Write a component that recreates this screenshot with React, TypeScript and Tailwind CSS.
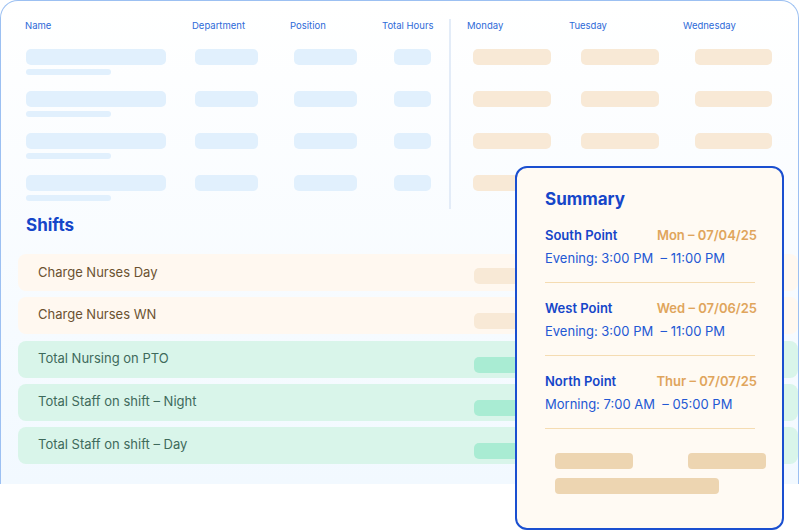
import React from "react";

const rows = [0, 1, 2, 3];
const f = { fontFamily: "Inter, 'Noto Sans', sans-serif" };

export default function App() {
  return (
    <div className="relative w-[800px] h-[531px] bg-white overflow-hidden" style={f}>
      <div className="h-[484px] w-[799px] rounded-t-[18px] border-x border-t border-[#9cc0f2] bg-gradient-to-b from-white to-[#f2f9ff] relative">
        <div className="flex pt-[18px]">
          <div className="w-[450px] border-r-2 border-[#e3ecf8] h-[190px]">
            <div className="flex text-[9.5px] text-[#2d6ad8] h-[14px] items-center">
              <div className="w-[191px] pl-[24px]">Name</div>
              <div className="w-[98px]">Department</div>
              <div className="w-[92px]">Position</div>
              <div>Total Hours</div>
            </div>
            <div className="flex flex-col gap-[26px] mt-[16px]">
              {rows.map((r) => (
                <div key={r} className="flex h-[16px]">
                  <div className="w-[194px] pl-[25px]">
                    <div className="h-[16px] w-[140px] rounded-[5px] bg-[#e1f0fd]" />
                    <div className="h-[6px] w-[85px] mt-[4px] rounded-full bg-[#e1f0fd]" />
                  </div>
                  <div className="w-[99px]"><div className="h-[16px] w-[63px] rounded-[5px] bg-[#e1f0fd]" /></div>
                  <div className="w-[100px]"><div className="h-[16px] w-[63px] rounded-[5px] bg-[#e1f0fd]" /></div>
                  <div className="h-[16px] w-[37px] rounded-[5px] bg-[#e1f0fd]" />
                </div>
              ))}
            </div>
          </div>
          <div className="flex-1">
            <div className="flex text-[9.5px] text-[#2d6ad8] h-[14px] items-center">
              <div className="w-[102px] pl-[16px]">Monday</div>
              <div className="w-[116px] pl-[16px]">Tuesday</div>
              <div className="pl-[14px]">Wednesday</div>
            </div>
            <div className="flex flex-col gap-[26px] mt-[16px]">
              {rows.map((r) => (
                <div key={r} className="flex h-[16px] pl-[22px]">
                  <div className="w-[78px] h-[16px] rounded-[5px] bg-[#f8e9d6]" />
                  <div className="w-[78px] h-[16px] rounded-[5px] bg-[#f8e9d6] ml-[30px]" />
                  <div className="w-[77px] h-[16px] rounded-[5px] bg-[#f8e9d6] ml-[36px]" />
                </div>
              ))}
            </div>
          </div>
        </div>
        <div className="pl-[25px] mt-[6px] text-[17px] font-bold text-[#1546c9] leading-[20px]">Shifts</div>
        <div className="flex flex-col gap-[6px] pl-[17px] mt-[19px]">
          {[
            ["Charge Nurses Day", "o", "c"],
            ["Charge Nurses WN", "o", "t"],
            ["Total Nursing on PTO", "g", "t"],
            ["Total Staff on shift – Night", "g", "t"],
            ["Total Staff on shift – Day", "g", "t"],
          ].map(([t, c, a], i) => (
            <div
              key={i}
              className={`relative h-[37px] rounded-[8px] pl-[20px] text-[13px] flex ${a === "c" ? "items-center" : "items-start pt-[8px]"} ${
                c === "o" ? "bg-[#fff8f0] text-[#6b5230]" : "bg-[#d9f5ea] text-[#3e6a5b]"
              } ${i === 2 ? "mt-[1px]" : ""}`}
            >
              {t}
              <div
                className={`absolute left-[456px] w-[60px] h-[16px] rounded-[5px] ${i === 0 ? "top-[14px]" : "top-[16px]"} ${
                  c === "o" ? "bg-[#f8e9d6]" : "bg-[#a9ecd3]"
                }`}
              />
            </div>
          ))}
        </div>
      </div>

      <div className="absolute left-[515px] top-[166px] w-[269px] h-[364px] rounded-[12px] border-2 border-[#1a4fd0] bg-[#fffaf3] px-[28px] pt-[20px]">
        <div className="text-[17px] font-bold text-[#1546c9] leading-[22px]">Summary</div>
        {[
          ["South Point", "Mon – 07/04/25", "Evening: 3:00 PM  – 11:00 PM"],
          ["West Point", "Wed – 07/06/25", "Evening: 3:00 PM  – 11:00 PM"],
          ["North Point", "Thur – 07/07/25", "Morning: 7:00 AM  – 05:00 PM"],
        ].map(([n, d, t], i) => (
          <div key={i} className={`${i === 0 ? "mt-[17px]" : "mt-[17px]"} border-b border-[#f5dcb2] pb-[16px] w-[210px]`}>
            <div className="flex justify-between text-[13px] font-semibold leading-[16px]">
              <span className="text-[#1546c9]">{n}</span>
              <span className="text-[#e0a55c] -mr-[2px]">{d}</span>
            </div>
            <div className="text-[13px] text-[#2358d3] mt-[7px] leading-[16px] whitespace-pre">{t}</div>
          </div>
        ))}
        <div className="pl-[10px] mt-[24px]">
          <div className="flex justify-between w-[211px]">
            <div className="w-[78px] h-[16px] rounded-[4px] bg-[#edd5b1]" />
            <div className="w-[78px] h-[16px] rounded-[4px] bg-[#edd5b1]" />
          </div>
          <div className="w-[164px] h-[16px] rounded-[4px] bg-[#edd5b1] mt-[9px]" />
        </div>
      </div>
    </div>
  );
}
